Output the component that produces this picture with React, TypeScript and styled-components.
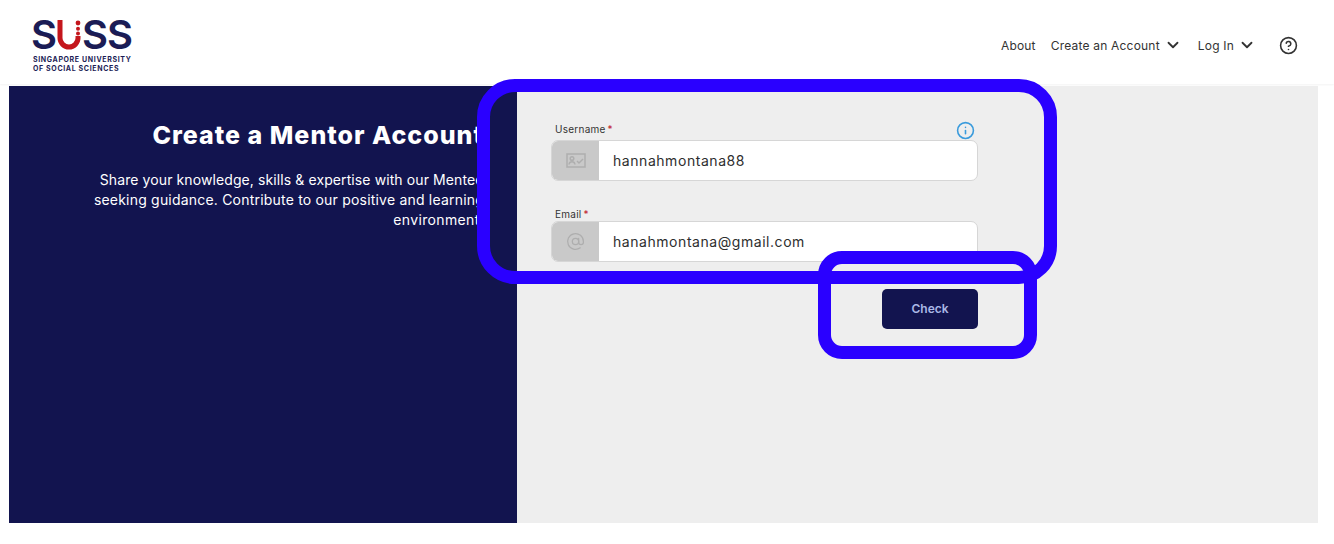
import React from 'react';
import styled, { createGlobalStyle } from 'styled-components';
import { ChevronDown, CircleHelp, Info, AtSign } from 'lucide-react';

const navy = '#12144f';

const GlobalStyle = createGlobalStyle`
    html, body {
        margin: 0;
        padding: 0;
        background: #fff;
        font-family: Inter, "Open Sans", "Liberation Sans", sans-serif;
    }
`;

const Page = styled.div`
    position: relative;
    width: 1334px;
    height: 544px;
    overflow: hidden;
`;

const Header = styled.header`
    height: 84px;
    margin-bottom: 2px;
    box-sizing: border-box;
    padding: 18px 36px 0 33px;
    display: flex;
    justify-content: space-between;
    align-items: flex-start;
    box-shadow: 0 1px 2px rgba(0, 0, 0, 0.05);
`;

const Logo = styled.div`
    display: flex;
    flex-direction: column;
    width: 100px;
`;

const LogoMark = styled.div`
    display: flex;
    align-items: center;
    height: 34px;
    margin-left: -2px;
    color: #1b1c55;
    font-size: 40px;
    font-weight: 600;
    line-height: 34px;
    letter-spacing: -1px;
`;

const LogoCaption = styled.div`
    margin-top: 3px;
    color: #1b1c55;
    font-size: 7px;
    font-weight: 700;
    line-height: 9px;
    letter-spacing: 0.65px;
    white-space: nowrap;
`;

const Nav = styled.nav`
    display: flex;
    align-items: center;
    height: 54px;
    color: #333;
    font-size: 12px;
    letter-spacing: 0.2px;
`;

const NavLink = styled.span<{ $gap: number }>`
    display: flex;
    align-items: center;
    margin-right: ${({ $gap }) => $gap}px;
    white-space: nowrap;

    svg {
        margin-left: 4px;
    }
`;

const Main = styled.main`
    display: grid;
    grid-template-columns: 508px 801px;
    height: 437px;
    margin-left: 9px;
`;

const IntroPanel = styled.section`
    background: ${navy};
    color: #fff;
    padding-top: 34px;
`;

const IntroClip = styled.div`
    width: 468px;
    overflow: hidden;
`;

const IntroCopy = styled.div`
    width: 475px;
    text-align: right;
`;

const Title = styled.h1`
    margin: 0 0 20px;
    font-size: 25px;
    font-weight: 800;
    line-height: 30px;
    letter-spacing: 1px;
    white-space: nowrap;
`;

const Blurb = styled.p`
    margin: 0;
    font-size: 14px;
    line-height: 20px;
`;

const BlurbLine = styled.span<{ $tracking: number; $overhang?: number }>`
    display: block;
    letter-spacing: ${({ $tracking }) => $tracking}px;
    margin-right: -${({ $overhang }) => $overhang ?? 0}px;
    white-space: nowrap;
`;

const FormPanel = styled.section`
    background: #eeeeee;
    padding: 32px 0 0 34px;
`;

const Form = styled.div`
    width: 427px;
    display: flex;
    flex-direction: column;
`;

const FieldBlock = styled.div`
    margin-bottom: 26px;

    &:last-of-type {
        margin-bottom: 27px;
    }
`;

const LabelRow = styled.div`
    display: flex;
    justify-content: space-between;
    align-items: center;
    min-height: 14px;
    padding: 0 4px;
`;

const Label = styled.label`
    color: #333;
    font-size: 10px;
    line-height: 14px;
    letter-spacing: 0.25px;
`;

const Required = styled.span`
    color: #c0172c;
    margin-left: 2px;
`;

const InfoIcon = styled(Info)`
    color: #3a9bdc;
    margin: 3px -1px 0 0;
`;

const InputGroup = styled.div`
    display: flex;
    height: 41px;
    box-sizing: border-box;
    border: 1px solid #d6d6d6;
    border-radius: 7px;
    background: #fff;
    overflow: hidden;
`;

const Addon = styled.div`
    width: 47px;
    flex: none;
    display: flex;
    align-items: center;
    justify-content: center;
    background: #c9c9c9;
    color: #aeaeae;
`;

const InputValue = styled.div`
    flex: 1;
    display: flex;
    align-items: center;
    padding: 0 0 1px 14px;
    color: #2e2e2e;
    font-size: 14px;
    letter-spacing: 0.55px;
`;

const CheckButton = styled.button`
    align-self: flex-end;
    width: 96px;
    height: 40px;
    padding: 0 0 2px;
    border: none;
    border-radius: 5px;
    background: ${navy};
    color: #aab8e6;
    font-family: inherit;
    font-size: 12px;
    font-weight: 600;
`;

const AnnotationRing = styled.div<{ $x: number; $y: number; $w: number; $h: number; $r: number }>`
    position: absolute;
    left: ${({ $x }) => $x}px;
    top: ${({ $y }) => $y}px;
    width: ${({ $w }) => $w}px;
    height: ${({ $h }) => $h}px;
    box-sizing: border-box;
    border: 13px solid #2a00ff;
    border-radius: ${({ $r }) => $r}px;
    pointer-events: none;
`;

const SussU = () => (
    <svg width="24" height="30" viewBox="0 0 24 30" style={{ margin: '0 1px 0 1px', flex: 'none' }}>
        <path d="M3 0V18a9 9 0 0 0 18 0V16" fill="none" stroke="#c4161c" strokeWidth="5" />
        <circle cx="21" cy="3" r="2.4" fill="#c4161c" />
        <circle cx="21" cy="8.8" r="2" fill="#c4161c" />
        <circle cx="21" cy="13.4" r="2" fill="#c4161c" />
    </svg>
);

const IdCardIcon = () => (
    <svg width="20" height="15" viewBox="0 0 20 15" fill="none" stroke="currentColor" strokeWidth="1.5">
        <rect x="1" y="1" width="18" height="13" />
        <circle cx="6" cy="5.5" r="1.8" />
        <path d="M3 11.5c.3-2 1.5-2.7 3-2.7s2.7.7 3 2.7" />
        <path d="M11 8l2 2 4-4" />
    </svg>
);

const fields = [
    { label: 'Username', value: 'hannahmontana88', icon: <IdCardIcon />, info: true },
    { label: 'Email', value: 'hanahmontana@gmail.com', icon: <AtSign size={19} strokeWidth={1.6} />, info: false },
];

export default function App() {
    return (
        <Page>
            <GlobalStyle />
            <Header>
                <Logo>
                    <LogoMark>
                        S<SussU />SS
                    </LogoMark>
                    <LogoCaption>
                        SINGAPORE UNIVERSITY
                        <br />
                        OF SOCIAL SCIENCES
                    </LogoCaption>
                </Logo>
                <Nav>
                    <NavLink $gap={15}>About</NavLink>
                    <NavLink $gap={16}>
                        Create an Account <ChevronDown size={18} strokeWidth={2.4} />
                    </NavLink>
                    <NavLink $gap={23}>
                        Log In <ChevronDown size={18} strokeWidth={2.4} />
                    </NavLink>
                    <CircleHelp size={19} strokeWidth={2} />
                </Nav>
            </Header>
            <Main>
                <IntroPanel>
                    <IntroClip>
                        <IntroCopy>
                            <Title>Create a Mentor Account</Title>
                            <Blurb>
                                <BlurbLine $tracking={0.1} $overhang={7}>
                                    Share your knowledge, skills &amp; expertise with our Mentees
                                </BlurbLine>
                                <BlurbLine $tracking={0.2}>seeking guidance. Contribute to our positive and learning</BlurbLine>
                                <BlurbLine $tracking={0.35}>environment.</BlurbLine>
                            </Blurb>
                        </IntroCopy>
                    </IntroClip>
                </IntroPanel>
                <FormPanel>
                    <Form>
                        {fields.map((f) => (
                            <FieldBlock key={f.label}>
                                <LabelRow>
                                    <Label>
                                        {f.label}
                                        <Required>*</Required>
                                    </Label>
                                    {f.info && <InfoIcon size={19} strokeWidth={2} />}
                                </LabelRow>
                                <InputGroup>
                                    <Addon>{f.icon}</Addon>
                                    <InputValue>{f.value}</InputValue>
                                </InputGroup>
                            </FieldBlock>
                        ))}
                        <CheckButton>Check</CheckButton>
                    </Form>
                </FormPanel>
            </Main>
            <AnnotationRing $x={477} $y={79} $w={580} $h={205} $r={38} />
            <AnnotationRing $x={818} $y={251} $w={219} $h={108} $r={24} />
        </Page>
    );
}
